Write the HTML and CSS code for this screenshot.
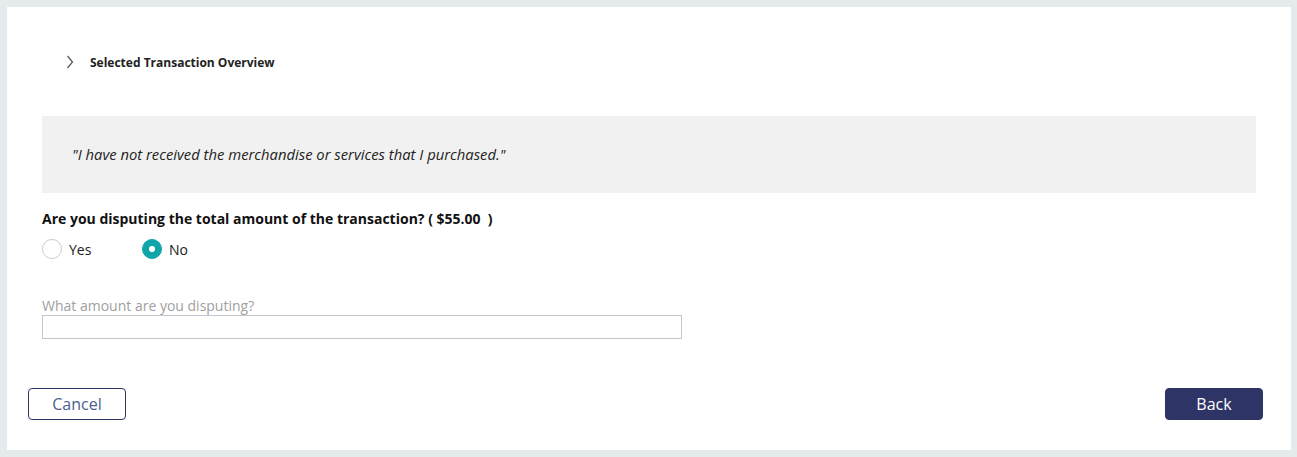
FILE: index.html
```html
<!DOCTYPE html>
<html>
<head>
<meta charset="utf-8">
<link rel="stylesheet" href="styles.css">
</head>
<body>
<div class="card">
  <div class="overview">
    <svg class="chev" width="8" height="14" viewBox="0 0 8 14"><path d="M1.5 1 L6.5 7 L1.5 13" fill="none" stroke="#555" stroke-width="1.2"/></svg>
    <span class="overview-title">Selected Transaction Overview</span>
  </div>
  <div class="quote">"I have not received the merchandise or services that I purchased."</div>
  <div class="question">Are you disputing the total amount of the transaction? ( $55.00&nbsp; )</div>
  <div class="radios">
    <label class="radio"><span class="dot"></span><span>Yes</span></label>
    <label class="radio checked"><span class="dot"></span><span>No</span></label>
  </div>
  <div class="field">
    <div class="field-label">What amount are you disputing?</div>
    <div class="input"></div>
  </div>
  <div class="actions">
    <button class="btn btn-outline">Cancel</button>
    <button class="btn btn-primary">Back</button>
  </div>
</div>
</body>
</html>
```
FILE: styles.css
```css
html, body { margin: 0; padding: 0; }
body {
  background: #e5eaed;
  padding: 7px 6px 7px 7px;
  font-family: "Open Sans", "Liberation Sans", sans-serif;
  color: #111;
  width: 1297px;
  height: 457px;
  box-sizing: border-box;
}
.card {
  background: #fff;
  height: 443px;
  box-sizing: border-box;
  padding: 0 35px;
}
.overview {
  display: flex;
  align-items: flex-start;
  height: 109px;
  padding-left: 24px;
  box-sizing: border-box;
}
.chev { margin-top: 48px; }
.overview-title {
  font-size: 12px;
  font-weight: 700;
  color: #222;
  margin-left: 16px;
  margin-top: 47px;
}
.quote {
  background: #f1f1f1;
  height: 77px;
  display: flex;
  align-items: center;
  padding-left: 30px;
  padding-bottom: 2px;
  box-sizing: border-box;
  font-style: italic;
  font-size: 14.8px;
  color: #222;
}
.question {
  margin-top: 16px;
  font-size: 14px;
  font-weight: 700;
  color: #111;
  line-height: 19px;
}
.radios {
  display: flex;
  margin-top: 10px;
  height: 22px;
  align-items: center;
}
.radio {
  display: flex;
  align-items: center;
  font-size: 14px;
  color: #222;
  width: 100px;
}
.dot {
  width: 20px;
  height: 20px;
  border: 1px solid #c8ccd2;
  border-radius: 50%;
  box-sizing: border-box;
  margin-right: 7px;
  position: relative;
}
.radio.checked .dot {
  background: #10a5a8;
  border-color: #10a5a8;
}
.radio.checked .dot::after {
  content: "";
  position: absolute;
  left: 6px;
  top: 6px;
  width: 6px;
  height: 6px;
  border-radius: 50%;
  background: #fff;
}
.field { margin-top: 36px; width: 640px; }
.field-label {
  font-size: 14px;
  color: #a0a0a0;
  line-height: 19px;
}
.input {
  height: 24px;
  border: 1px solid #c3c8d0;
  box-sizing: border-box;
}
.actions {
  display: flex;
  justify-content: space-between;
  margin: 49px -7px 0 -14px;
}
.btn {
  width: 98px;
  height: 32px;
  border-radius: 4px;
  font-family: "Open Sans", "Liberation Sans", sans-serif;
  font-size: 16px;
  box-sizing: border-box;
  cursor: pointer;
  padding: 0;
}
.btn-outline {
  background: #fff;
  border: 1px solid #2c3566;
  color: #4c5d8f;
}
.btn-primary {
  background: #2e3566;
  border: 1px solid #2e3566;
  color: #fff;
}
```
